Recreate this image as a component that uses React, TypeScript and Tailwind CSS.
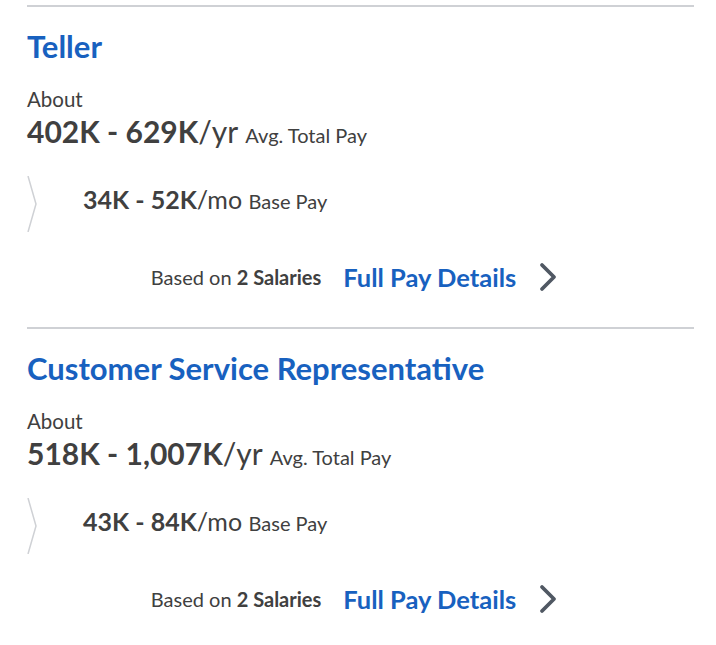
import React from "react";

interface iJobProps {
  title: string;
  low: string;
  high: string;
  baseLow: string;
  baseHigh: string;
  count: number;
}

const jobs: iJobProps[] = [
  { title: "Teller", low: "402K", high: "629K", baseLow: "34K", baseHigh: "52K", count: 2 },
  {
    title: "Customer Service Representative",
    low: "518K",
    high: "1,007K",
    baseLow: "43K",
    baseHigh: "84K",
    count: 2,
  },
];

const JobCard = ({ title, low, high, baseLow, baseHigh, count }: iJobProps) => {
  return (
    <div className="border-t-2 border-[#cfd1d5]">
      <h2 className="mt-[22px] text-[31px] leading-[34px] font-bold text-[#1861bf]">{title}</h2>
      <p className="mt-[24px] text-[20.5px] leading-[24px]">About</p>
      <p className="mt-[3px] text-[30px] leading-[34px]">
        <span className="font-bold">
          {low} - {high}
        </span>
        /yr <span className="text-[20px]">Avg. Total Pay</span>
      </p>
      <div className="mt-[24px] flex items-center">
        <svg width="12" height="56" viewBox="0 0 12 56" className="shrink-0">
          <path d="M1 0 L9 28 L1 56" fill="none" stroke="#cfd1d5" strokeWidth="1.5" />
        </svg>
        <p className="ml-[44px] pb-[8px] text-[25px] leading-[30px]">
          <span className="font-bold">
            {baseLow} - {baseHigh}
          </span>
          /mo <span className="text-[20px]">Base Pay</span>
        </p>
      </div>
      <div className="mt-[30px] mb-[35px] flex h-[30px] items-center justify-center pr-3">
        <span className="text-[20px]">
          Based on <span className="font-bold">{count} Salaries</span>
        </span>
        <a href="#" className="ml-[22px] text-[25.5px] font-bold text-[#1861bf]">
          Full Pay Details
        </a>
        <svg width="20" height="30" viewBox="0 0 20 30" className="ml-[22px]">
          <path d="M4 3 L16 15 L4 27" fill="none" stroke="#505863" strokeWidth="3.8" strokeLinecap="round" strokeLinejoin="round" />
        </svg>
      </div>
    </div>
  );
}

export default function App() {
  return (
    <div
      className="min-h-[645px] bg-white px-[27px] pt-[5px] text-[#404040]"
      style={{ fontFamily: "Lato, 'Open Sans', sans-serif", width: 716 }}
    >
      <div className="w-[667px]">
        {jobs.map((j) => (
          <JobCard key={j.title} {...j} />
        ))}
      </div>
    </div>
  );
}
